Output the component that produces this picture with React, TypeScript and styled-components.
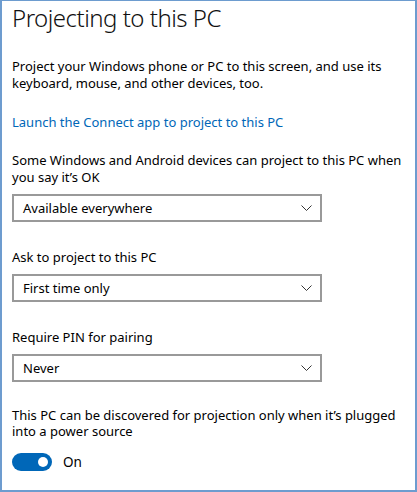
import styled, { createGlobalStyle } from "styled-components";

const Global = createGlobalStyle`
  html, body {
    margin: 0;
    padding: 0;
    background: #fff;
  }
  body {
    font-family: "Noto Sans", "Open Sans", sans-serif;
    color: #000;
  }
`;

const Panel = styled.div`
  width: 417px;
  height: 492px;
  box-sizing: border-box;
  border: 2px solid #6d9ccf;
  border-top-width: 1px;
  padding: 1px 6px 0 10px;
  display: flex;
  flex-direction: column;
  background: #fff;
`;

const Title = styled.h1`
  margin: 0;
  font-size: 24px;
  font-weight: 300;
  letter-spacing: -0.5px;
  line-height: 32px;
  color: #111;
`;

const Text = styled.p<{ $gap?: number }>`
  margin: ${({ $gap }) => $gap ?? 0}px 0 0;
  font-size: 13px;
  line-height: 16.5px;
`;

const Link = styled.a`
  margin-top: 23px;
  font-size: 13px;
  line-height: 16.5px;
  color: #0067b8;
  text-decoration: none;
`;

const Select = styled.div`
  margin-top: 9px;
  width: 310px;
  height: 28px;
  box-sizing: border-box;
  border: 2px solid #999;
  display: flex;
  align-items: center;
  justify-content: space-between;
  padding: 0 8px 0 9px;
  font-size: 13px;
`;

const Chevron = () => (
  <svg width="11" height="7" viewBox="0 0 11 7">
    <polyline points="0.5,0.5 5.5,5.5 10.5,0.5" fill="none" stroke="#333" strokeWidth="1" />
  </svg>
);

const ToggleRow = styled.div`
  margin-top: 13px;
  display: flex;
  align-items: center;
  gap: 11px;
  font-size: 13.5px;
`;

const Track = styled.div<{ $on: boolean }>`
  width: 40px;
  height: 18px;
  box-sizing: border-box;
  border-radius: 9px;
  background: ${({ $on }) => ($on ? "#0067b8" : "#fff")};
  display: flex;
  align-items: center;
  justify-content: ${({ $on }) => ($on ? "flex-end" : "flex-start")};
  padding: 0 4px;
`;

const Knob = styled.div`
  width: 10px;
  height: 10px;
  border-radius: 50%;
  background: #fff;
`;

const Dropdown = ({ value }: { value: string }) => (
  <Select>
    <span>{value}</span>
    <Chevron />
  </Select>
);

const App = () => {
  return (
    <>
      <Global />
      <Panel>
        <Title>Projecting to this PC</Title>
        <Text $gap={24}>
          Project your Windows phone or PC to this screen, and use its keyboard, mouse, and other devices, too.
        </Text>
        <Link href="#">Launch the Connect app to project to this PC</Link>
        <Text $gap={21.5}>Some Windows and Android devices can project to this PC when you say it’s OK</Text>
        <Dropdown value="Available everywhere" />
        <Text $gap={26.5}>Ask to project to this PC</Text>
        <Dropdown value="First time only" />
        <Text $gap={26.5}>Require PIN for pairing</Text>
        <Dropdown value="Never" />
        <Text $gap={24.5}>This PC can be discovered for projection only when it’s plugged into a power source</Text>
        <ToggleRow>
          <Track $on>
            <Knob />
          </Track>
          <span>On</span>
        </ToggleRow>
      </Panel>
    </>
  );
};

export default App;
